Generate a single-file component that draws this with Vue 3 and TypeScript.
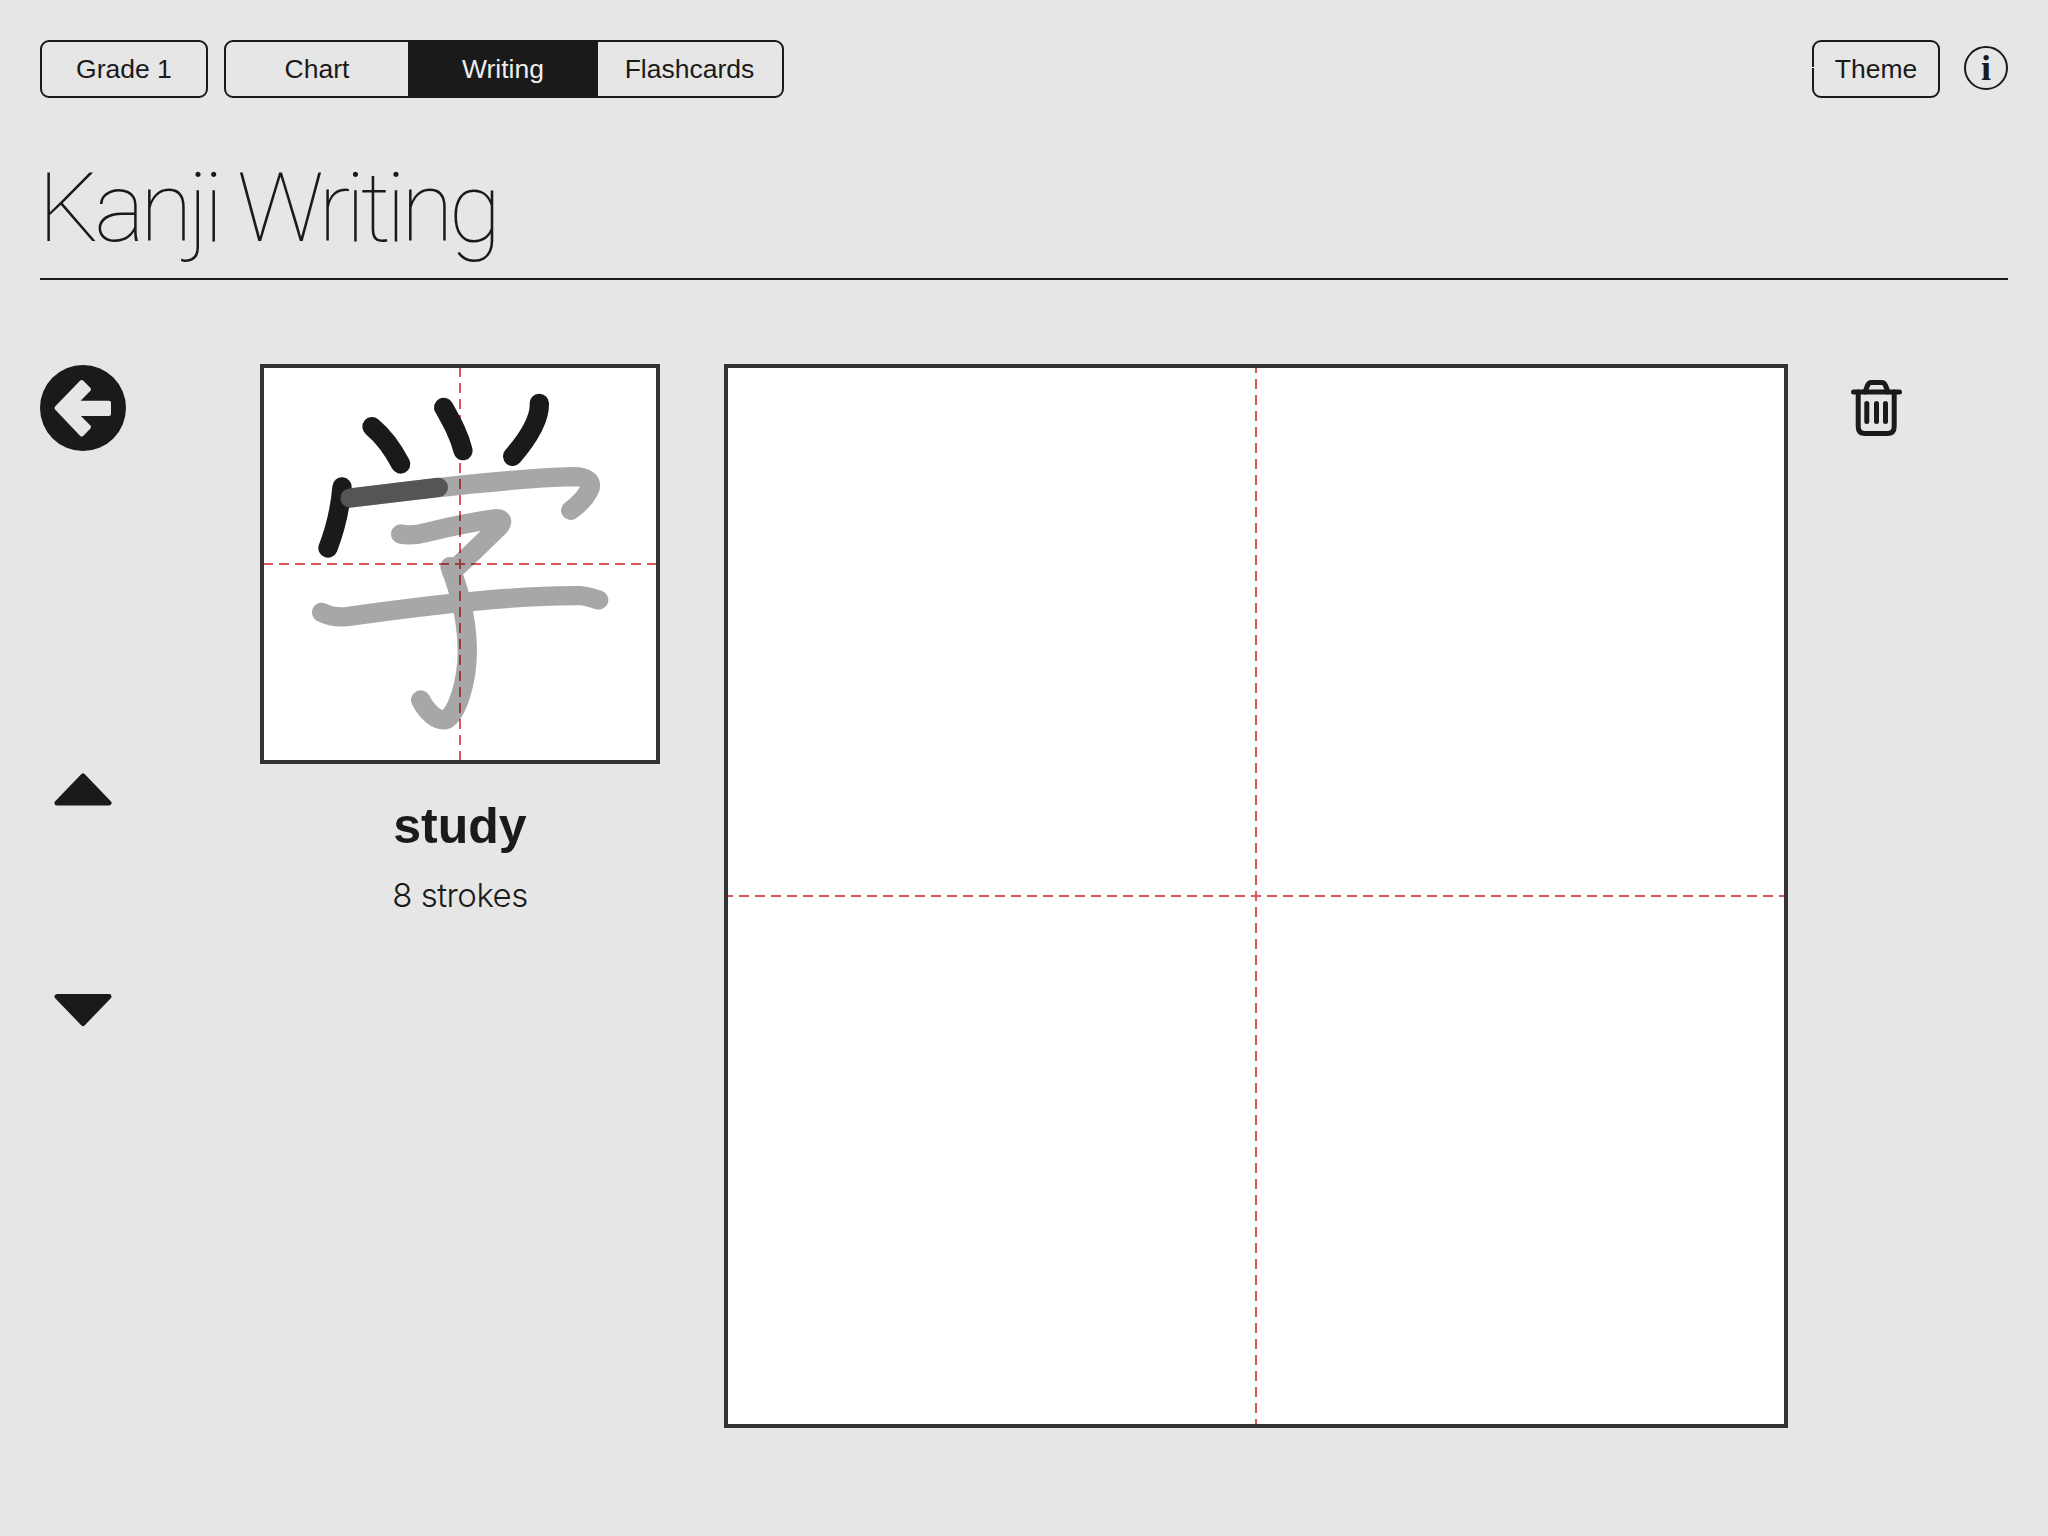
<script setup lang="ts">
const tabs: { label: string; active: boolean; width: number }[] = [
  { label: 'Chart', active: false, width: 182 },
  { label: 'Writing', active: true, width: 190 },
  { label: 'Flashcards', active: false, width: 183 },
]
</script>

<template>
  <div class="page">
    <header class="top">
      <button class="btn grade">Grade 1</button>
      <div class="seg">
        <button
          v-for="t in tabs"
          :key="t.label"
          class="seg-item"
          :class="{ active: t.active }"
          :style="{ width: t.width + 'px' }"
        >{{ t.label }}</button>
      </div>
      <div class="spacer"></div>
      <button class="btn theme">Theme<span class="tick"></span></button>
      <div class="info"><span>i</span></div>
    </header>

    <h1 class="title">Kanji Writing</h1>
    <div class="rule"></div>

    <main class="main">
      <div class="nav">
        <svg class="back" width="86" height="86" viewBox="0 0 86 86">
          <circle cx="43" cy="43" r="43" fill="#1a1a1a" />
          <path
            d="M16.5 43 L41.7 17 L49 24.3 L36 37.7 H69 V49 H36 L49 62 L41.7 69.5 Z"
            fill="#e6e6e6" stroke="#e6e6e6" stroke-width="4" stroke-linejoin="round"
          />
        </svg>
        <svg class="up" width="58" height="34" viewBox="0 0 58 34">
          <path d="M29 3 L55 30 H3 Z" fill="#1a1a1a" stroke="#1a1a1a" stroke-width="5" stroke-linejoin="round" />
        </svg>
        <svg class="down" width="58" height="34" viewBox="0 0 58 34">
          <path d="M3 2.5 H55 L29 29.5 Z" fill="#1a1a1a" stroke="#1a1a1a" stroke-width="5" stroke-linejoin="round" />
        </svg>
      </div>

      <div class="kanji-col">
        <div class="kanji-box">
          <svg width="392" height="392" viewBox="42 54 1176 1176">
            <g fill="none" stroke="#dd5555" stroke-width="6" stroke-dasharray="30 18" stroke-dashoffset="3">
              <line x1="42" y1="642" x2="1218" y2="642" />
              <line x1="630" y1="54" x2="630" y2="1230" />
            </g>
            <g fill="none" stroke="#1a1a1a" stroke-width="58" stroke-linecap="round" stroke-linejoin="round">
              <path d="M366 230 C400 258 430 300 452 342" />
              <path d="M581 172 C605 215 628 255 639 302" />
              <path d="M868 160 C870 210 830 270 788 319" />
              <path d="M276 411 C270 480 255 540 234 594" />
            </g>
            <g fill="none" stroke="#1a1a1a" stroke-width="58" stroke-linecap="round" stroke-linejoin="round" opacity="0.38">
              <path d="M300 444 C500 420 780 385 970 380 C1010 380 1030 395 1018 420 C1005 445 985 465 962 481" />
              <path d="M452 552 C480 558 500 555 530 547 C600 530 670 515 740 506 C760 506 758 520 745 532 C700 575 650 625 605 665" />
              <path d="M600 650 C615 690 650 780 652 900 C652 1000 620 1090 590 1108 C560 1115 530 1085 512 1050" />
              <path d="M215 787 C240 800 260 803 290 800 C500 770 800 735 990 737 C1010 738 1030 745 1046 750" />
            </g>
            <path d="M300 444 L565 412" fill="none" stroke="#555555" stroke-width="58" stroke-linecap="round" />
          </svg>
        </div>
        <div class="meaning">study</div>
        <div class="strokes">8 strokes</div>
      </div>

      <div class="canvas">
        <svg width="1056" height="1056" viewBox="0 0 1056 1056">
          <g fill="none" stroke="#dd5555" stroke-width="2" stroke-dasharray="10 6" stroke-dashoffset="5">
            <line x1="0" y1="528" x2="1056" y2="528" />
            <line x1="528" y1="0" x2="528" y2="1056" />
          </g>
        </svg>
      </div>

      <svg class="trash" width="51" height="57" viewBox="0 0 51 57">
        <g fill="none" stroke="#1a1a1a" stroke-linecap="round" stroke-linejoin="round" stroke-width="5">
          <path d="M2.5 12 H48.5" />
          <path d="M14 12 L16.5 5.5 Q17.5 2.5 20.5 2.5 H30.5 Q33.5 2.5 34.5 5.5 L37 12" />
          <path d="M7.2 12 V46.5 Q7.2 53.5 14.2 53.5 H36.2 Q43.2 53.5 43.2 46.5 V12" />
          <path d="M15.8 23.5 V41.5" />
          <path d="M25.5 23.5 V41.5" />
          <path d="M34.5 23.5 V41.5" />
        </g>
      </svg>
    </main>
  </div>
</template>

<style>
html, body { margin: 0; background: #e6e6e6; }
</style>

<style scoped>
.page {
  width: 2048px;
  height: 1536px;
  box-sizing: border-box;
  padding: 40px 40px 0;
  background: #e6e6e6;
  color: #1a1a1a;
  font-family: "Liberation Sans", Arial, sans-serif;
  overflow: hidden;
}
.top { display: flex; align-items: flex-start; height: 58px; }
.spacer { flex: 1; }
.btn {
  position: relative;
  box-sizing: border-box;
  height: 58px;
  border: 2.5px solid #1a1a1a;
  border-radius: 9px;
  background: transparent;
  color: #1a1a1a;
  font: 26.5px "Liberation Sans", Arial, sans-serif;
  padding: 0;
}
.grade { width: 168px; margin-right: 16px; }
.theme { width: 128px; }
.tick {
  position: absolute;
  left: -2.5px;
  top: 25px;
  width: 2px;
  height: 1px;
  background: #fff;
}
.seg {
  display: flex;
  box-sizing: border-box;
  width: 560px;
  height: 58px;
  border: 2.5px solid #1a1a1a;
  border-radius: 9px;
  overflow: hidden;
}
.seg-item {
  border: 0;
  padding: 0;
  background: transparent;
  color: #1a1a1a;
  font: 26.5px "Liberation Sans", Arial, sans-serif;
}
.seg-item.active { background: #1a1a1a; color: #eee; }
.info {
  box-sizing: border-box;
  width: 44px;
  height: 44px;
  margin: 6px 0 0 24px;
  border: 2.5px solid #1a1a1a;
  border-radius: 50%;
  display: flex;
  align-items: center;
  justify-content: center;
  font: bold 36px/1 "Liberation Serif", serif;
}
.title {
  margin: 22px 0 0 -2px;
  height: 158px;
  padding-top: 28px;
  box-sizing: border-box;
  font-family: Roboto, sans-serif;
  font-weight: 100;
  font-size: 96px;
  line-height: 120px;
  letter-spacing: -4.8px;
}
.rule { height: 2px; background: #1a1a1a; }
.main { display: flex; align-items: flex-start; margin-top: 84px; }
.nav { width: 86px; margin-top: 1px; display: flex; flex-direction: column; align-items: center; flex: none; }
.back { display: block; }
.up { margin-top: 322px; display: block; }
.down { margin-top: 187px; display: block; }
.kanji-col { margin-left: 134px; width: 400px; flex: none; text-align: center; }
.kanji-box {
  box-sizing: border-box;
  width: 400px;
  height: 400px;
  border: 4px solid #333;
  background: #fff;
}
.kanji-box svg, .canvas svg { display: block; }
.meaning {
  margin-top: 32px;
  font-size: 50px;
  font-weight: 700;
  line-height: 60px;
}
.strokes {
  margin-top: 17px;
  font-family: Inter, sans-serif;
  font-weight: 300;
  font-size: 33px;
  letter-spacing: -0.5px;
  line-height: 44px;
}
.canvas {
  box-sizing: border-box;
  width: 1064px;
  height: 1064px;
  margin-left: 64px;
  border: 4px solid #333;
  background: #fff;
  flex: none;
}
.trash { margin: 16px 0 0 63px; flex: none; }
</style>
